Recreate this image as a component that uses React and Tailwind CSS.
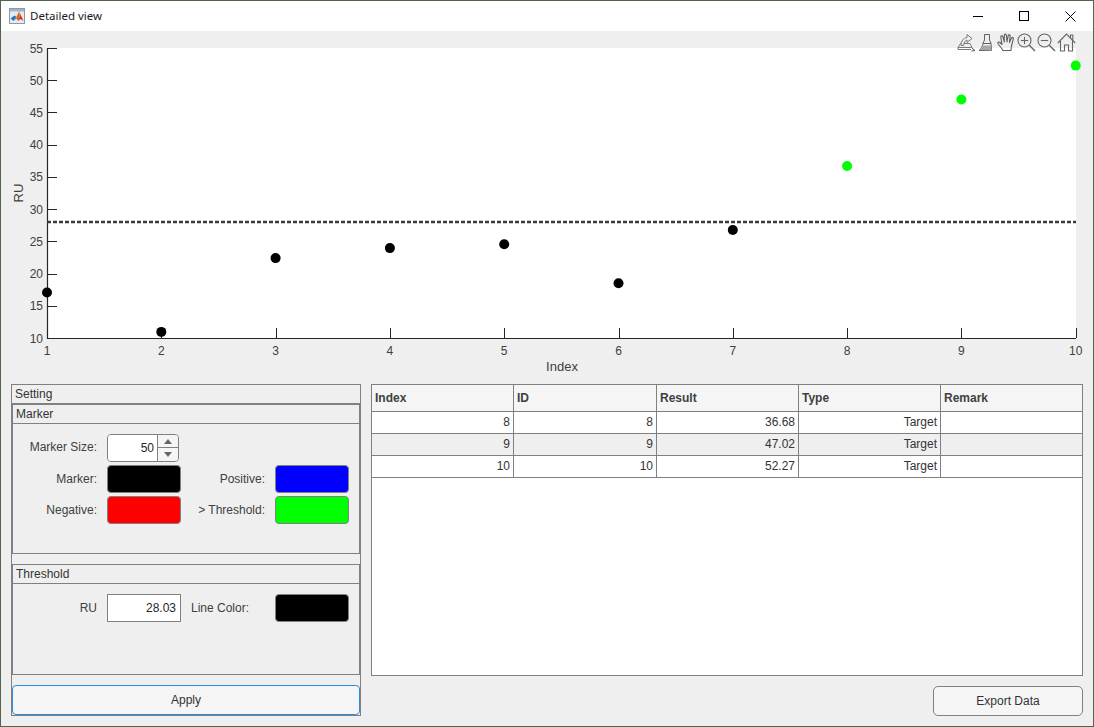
import React from "react";

const points = [
  [1, 17.05, "#000000"],
  [2, 10.95, "#000000"],
  [3, 22.4, "#000000"],
  [4, 23.95, "#000000"],
  [5, 24.55, "#000000"],
  [6, 18.5, "#000000"],
  [7, 26.75, "#000000"],
  [8, 36.68, "#00ff00"],
  [9, 47.02, "#00ff00"],
  [10, 52.27, "#00ff00"],
];

const rows = [
  ["8", "8", "36.68", "Target", ""],
  ["9", "9", "47.02", "Target", ""],
  ["10", "10", "52.27", "Target", ""],
];

const headers = ["Index", "ID", "Result", "Type", "Remark"];
const colWidths = ["w-[142px]", "w-[143px]", "w-[142px]", "w-[142px]", "w-[141px]"];

const xPos = (i) => 47 + (i - 1) * 114.3;
const yPos = (v) => 338 - (v - 10) * 6.444;

const MatlabIcon = () => (
  <svg width="16" height="16" viewBox="0 0 16 16">
    <rect x="0.5" y="0.5" width="15" height="15" fill="#e6ebf1" stroke="#8b97a5" />
    <rect x="1" y="1" width="14" height="2.5" fill="#9fb4cc" />
    <path d="M1.5 10.5 L5.5 7.5 L7.5 9 L4.5 13 Z" fill="#2f6fb5" />
    <path d="M5.5 7.5 L7.5 9 L4.5 13 L8 10.5 Z" fill="#5fa0d8" />
    <path d="M7.5 9 L10 3.5 L11 7.5 L9 13 L7.5 10.5 Z" fill="#e0601c" />
    <path d="M10 3.5 L12 7.5 L14.5 13 L11.5 11 L9 13 L11 7.5 Z" fill="#c8361a" />
    <path d="M10 3.5 L11.5 6 L11 9 Z" fill="#f2a93a" />
  </svg>
);

const ExportIcon = () => (
  <svg width="19" height="19" viewBox="0 0 19 19" fill="none" stroke="#7a7a7a" strokeWidth="1">
    <path d="M1 14.5 L3.5 10.5 L13 10.5 L15 14.5 Z" />
    <path d="M1 14.5 L1 16.5 L14 16.5" />
    <path d="M4 12.5 C4 8 6.5 5 10 4.5 L10 1.5 L15 5.5 L10 9.5 L10 7 C8 7.5 7 9.5 6.5 12.5 Z" fill="#efefef" />
    <path d="M15 15 L18 17.5 L14.5 18" stroke="#555555" />
  </svg>
);

const BrushIcon = () => (
  <svg width="19" height="19" viewBox="0 0 19 19" fill="none" stroke="#606060" strokeWidth="1">
    <path d="M7.5 1.5 L12.5 1.5 L12.5 7 L14 10.5 L14.5 17.5 L2 17.5 C4 16 5.5 13.5 6 10.5 L7.5 7 Z" />
    <path d="M6 10.5 L14 10.5" />
    <path d="M2.5 17 C4.5 15.5 5.5 14 6 12.5 L14 12.5 L14.5 17.5 Z" fill="#a8a8a8" stroke="none" />
  </svg>
);

const HandIcon = () => (
  <svg width="19" height="19" viewBox="0 0 19 19" fill="none" stroke="#606060" strokeWidth="1.1" strokeLinejoin="round">
    <path d="M6 17.5 C5 15.5 2.5 13 1 10.5 C0.5 9 2 8.5 3 9.5 L5 11.5 L3.8 4 C3.6 2.7 5.5 2.3 5.9 3.7 L7.3 9 L7.3 2.2 C7.3 0.8 9.3 0.8 9.4 2.2 L10 9 L11.2 2.7 C11.5 1.4 13.3 1.7 13.1 3.1 L12.4 9.5 L14.5 5 C15.1 3.9 16.7 4.5 16.3 5.8 L14.5 13 C14.2 14.5 14 16 14 17.5 Z" />
  </svg>
);

const MagnifierIcon = ({ plus }) => (
  <svg width="19" height="19" viewBox="0 0 19 19" fill="none" stroke="#666666" strokeWidth="1.1">
    <circle cx="7.5" cy="7.5" r="6.5" />
    <path d="M3.8 7.5 L11.2 7.5" />
    {plus && <path d="M7.5 3.8 L7.5 11.2" />}
    <path d="M12.3 12.3 L18 18" strokeWidth="1.4" />
  </svg>
);

const HomeIcon = () => (
  <svg width="19" height="19" viewBox="0 0 19 19" fill="none" stroke="#666666" strokeWidth="1.1">
    <path d="M0.8 10 L9.5 1 L18.2 10" />
    <path d="M13.5 5 L13.5 2 L15.8 2 L15.8 7.5" />
    <path d="M3.5 8 L3.5 18 L7.5 18 L7.5 12 L11.5 12 L11.5 18 L15.5 18 L15.5 8" />
  </svg>
);

const SpinnerArrow = ({ down }) => (
  <svg width="8" height="5" viewBox="0 0 8 5">
    <path d={down ? "M0 0 L8 0 L4 5 Z" : "M0 5 L8 5 L4 0 Z"} fill="#666666" />
  </svg>
);

const ColorButton = ({ color }) => (
  <button className={`h-[28px] w-[74px] rounded-[4px] border border-[#808080] ${color}`} />
);

const Label = ({ children }) => <span className="text-right text-[#404040]">{children}</span>;

const PanelTitle = ({ children }) => (
  <div className="h-[19px] border-b border-[#808080] pl-[3px] leading-[18px] text-[#333333]">{children}</div>
);

const Chart = () => (
  <svg width="1092" height="349" viewBox="1 31 1092 349" className="block" style={{ fontFamily: "'Liberation Sans', Arial, sans-serif" }}>
    <rect x="47" y="48" width="1029" height="290" fill="#ffffff" />
    <path d="M47.5 48 L47.5 338.5 L1076 338.5" fill="none" stroke="#262626" strokeWidth="1.2" />
    {[10, 15, 20, 25, 30, 35, 40, 45, 50, 55].map((v) => (
      <g key={v}>
        <line x1="47" x2="57" y1={Math.round(yPos(v)) + 0.5} y2={Math.round(yPos(v)) + 0.5} stroke="#262626" />
        <text x="43" y={yPos(v) + 4.5} textAnchor="end" fontSize="12" fill="#404040">{v}</text>
      </g>
    ))}
    {[1, 2, 3, 4, 5, 6, 7, 8, 9, 10].map((i) => (
      <g key={i}>
        <line x1={Math.round(xPos(i)) + 0.5} x2={Math.round(xPos(i)) + 0.5} y1="328" y2="338" stroke="#262626" />
        <text x={xPos(i)} y="355" textAnchor="middle" fontSize="12" fill="#404040">{i}</text>
      </g>
    ))}
    <line x1="47" x2="1076" y1="222" y2="222" stroke="#3a3a3a" strokeWidth="2.5" strokeDasharray="4 2" />
    {points.map(([i, v, c]) => (
      <circle key={i} cx={xPos(i)} cy={yPos(v)} r="5" fill={c} />
    ))}
    <text x="562" y="371" textAnchor="middle" fontSize="13" fill="#404040">Index</text>
    <text x="0" y="0" textAnchor="middle" fontSize="13" fill="#404040" transform="translate(23 193) rotate(-90)">RU</text>
  </svg>
);

export default function App() {
  return (
    <div className="flex h-[727px] w-[1094px] flex-col overflow-hidden border border-[#56634c] bg-[#efefef] text-[12px] text-[#262626] font-['Liberation_Sans',Arial,sans-serif]">
      {/* title bar */}
      <div className="flex h-[30px] shrink-0 items-center bg-white pl-[8px] font-['Noto_Sans',sans-serif] text-[11.5px] text-[#1a1a1a]">
        <MatlabIcon />
        <span className="ml-[5px]">Detailed view</span>
        <div className="ml-auto flex h-full items-center">
          <div className="flex h-full w-[46px] items-center justify-center">
            <div className="h-px w-[10px] bg-black" />
          </div>
          <div className="flex h-full w-[46px] items-center justify-center">
            <div className="h-[10px] w-[10px] border border-black" />
          </div>
          <div className="flex h-full w-[46px] items-center justify-center">
            <svg width="11" height="11" viewBox="0 0 11 11" stroke="#000000" strokeWidth="1">
              <path d="M0.5 0.5 L10.5 10.5 M10.5 0.5 L0.5 10.5" />
            </svg>
          </div>
        </div>
      </div>

      {/* plot */}
      <div className="relative h-[349px] shrink-0">
        <Chart />
        <div className="absolute right-[17px] top-[2px] flex gap-px">
          <ExportIcon />
          <BrushIcon />
          <HandIcon />
          <MagnifierIcon plus />
          <MagnifierIcon />
          <HomeIcon />
        </div>
      </div>

      {/* bottom */}
      <div className="flex gap-[10px] pl-[10px] pt-[4px]">
        {/* settings */}
        <div className="h-[332px] w-[350px] border border-[#808080]">
          <div className="h-[19px] border-b border-[#808080] pl-[3px] leading-[18px] text-[#333333]">Setting</div>

          <div className="h-[150px] border border-[#808080]">
            <PanelTitle>Marker</PanelTitle>
            <div className="grid grid-cols-[84px_74px_74px_74px] items-center gap-x-[10px] gap-y-[3px] pt-[10px]">
              <span className="pb-[2px] text-right text-[#404040]">Marker Size:</span>
              <div className="col-span-3 flex h-[28px] w-[72px] overflow-hidden rounded-[4px] border border-[#808080]">
                <div className="w-[49px] bg-white pr-[3px] text-right leading-[27px]">50</div>
                <div className="flex w-[21px] flex-col border-l border-[#808080] bg-[#f5f5f5]">
                  <div className="flex h-[13px] items-center justify-center border-b border-[#808080]">
                    <SpinnerArrow />
                  </div>
                  <div className="flex flex-1 items-center justify-center">
                    <SpinnerArrow down />
                  </div>
                </div>
              </div>
              <Label>Marker:</Label>
              <ColorButton color="bg-black" />
              <Label>Positive:</Label>
              <ColorButton color="bg-[#0000ff]" />
              <Label>Negative:</Label>
              <ColorButton color="bg-[#ff0000]" />
              <Label>&gt; Threshold:</Label>
              <ColorButton color="bg-[#00ff00]" />
            </div>
          </div>

          <div className="mt-[10px] h-[111px] border border-[#808080]">
            <PanelTitle>Threshold</PanelTitle>
            <div className="grid grid-cols-[84px_74px_74px_74px] items-center gap-x-[10px] pt-[10px]">
              <Label>RU</Label>
              <div className="h-[28px] border border-[#808080] bg-white pr-[4px] text-right leading-[26px]">28.03</div>
              <span className="text-[#404040]">Line Color:</span>
              <ColorButton color="bg-black" />
            </div>
          </div>

          <button className="mt-[10px] h-[30px] w-full rounded-[4px] border border-[#2b8cdb] bg-[#f5f5f5] text-[#333333]">Apply</button>
        </div>

        {/* table */}
        <div className="flex w-[712px] flex-col">
          <div className="h-[292px] border border-[#808080] bg-white">
            <table className="table-fixed border-separate border-spacing-0">
              <thead>
                <tr>
                  {headers.map((h, i) => (
                    <th
                      key={h}
                      className={`h-[27px] border-b border-[#808080] bg-[#f5f5f5] pl-[3px] text-left font-bold text-[#404040] ${colWidths[i]} ${i < 4 ? "border-r" : ""}`}
                    >
                      {h}
                    </th>
                  ))}
                </tr>
              </thead>
              <tbody>
                {rows.map((row, r) => (
                  <tr key={r} className={r === 1 ? "bg-[#efefef]" : "bg-white"}>
                    {row.map((cell, i) => (
                      <td
                        key={i}
                        className={`h-[22px] border-b border-[#808080] p-0 pb-[2px] pr-[3px] text-right text-[#333333] ${i < 4 ? "border-r" : ""}`}
                      >
                        {cell}
                      </td>
                    ))}
                  </tr>
                ))}
              </tbody>
            </table>
          </div>
          <button className="mt-[10px] h-[30px] w-[150px] self-end rounded-[5px] border border-[#808080] bg-[#f5f5f5] text-[#333333]">Export Data</button>
        </div>
      </div>
    </div>
  );
}
